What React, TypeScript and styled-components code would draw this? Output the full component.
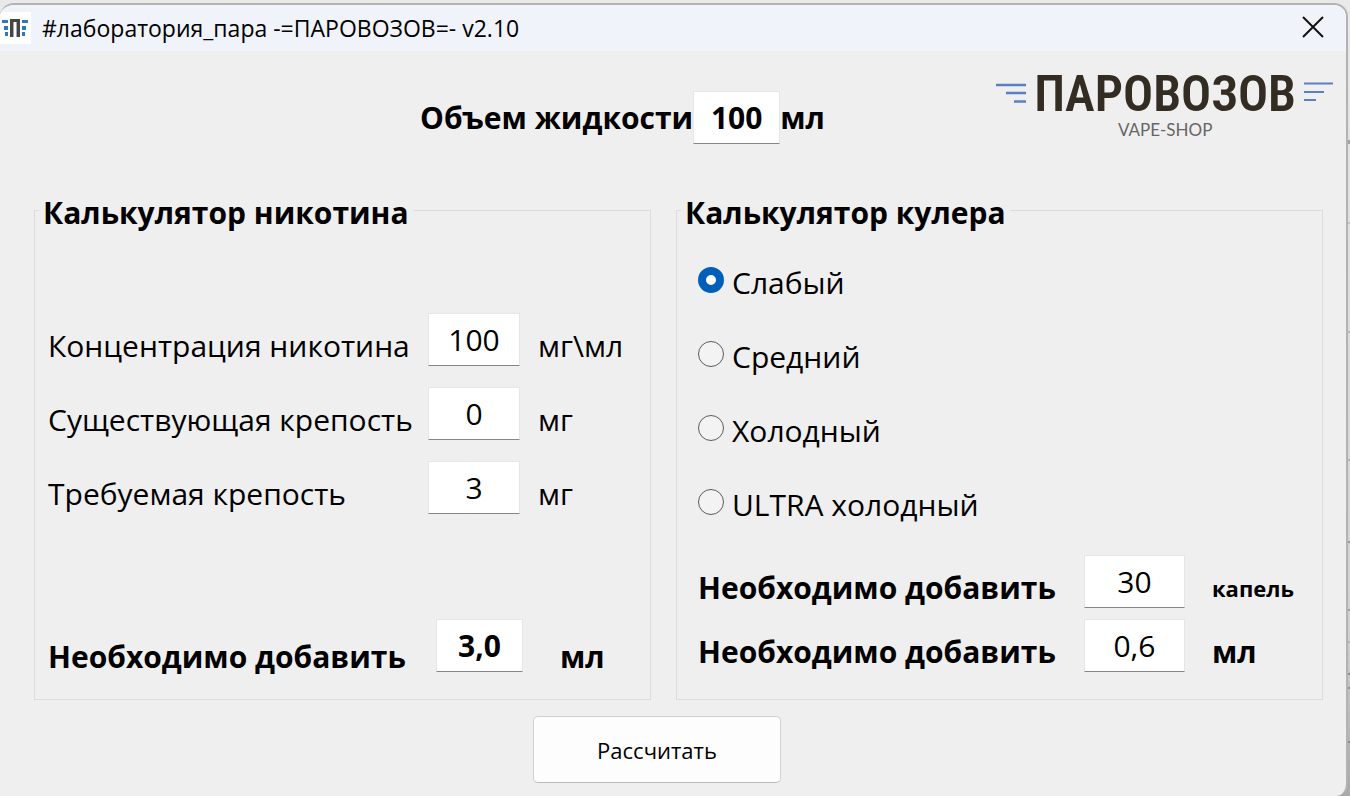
import React, { useState } from "react";
import styled, { createGlobalStyle } from "styled-components";

const edgeLines = [
  [140, 4, "#a2a2a2"],
  [222, 2, "#c2c2c2"],
  [331, 2, "#b8b8b8"],
  [459, 2, "#b4b4b4"],
  [541, 2, "#9c9c9c"],
  [609, 2, "#a4a4a4"],
  [641, 2, "#b4b4b4"],
  [673, 2, "#8f8f8f"],
  [687, 2, "#8f8f8f"],
  [741, 2, "#8a8a8a"],
]
  .map(([top, height, color]) => `linear-gradient(${color}, ${color}) right ${top}px / 2px ${height}px no-repeat`)
  .join(", ");

const GlobalStyle = createGlobalStyle`
  * { box-sizing: border-box; }
  body {
    margin: 0;
    background: linear-gradient(#e9e9e9, #e2e2e2 20%, #d0d0d0 80%, #a8a8a8);
    font-family: "Open Sans", "Noto Sans", sans-serif;
    color: #000;
  }
`;

const Desktop = styled.div`
  display: flow-root;
  background: ${edgeLines};
`;

const Window = styled.div`
  display: flex;
  flex-direction: column;
  min-height: calc(100vh - 3px);
  margin: 3px 2px 0 0;
  border-top: 2px solid #b3b3b3;
  border-right: 2px solid #b3b3b3;
  border-radius: 14px 14px 12px 0;
  background: #efefef;
  overflow: hidden;
`;

const TitleBar = styled.header`
  display: flex;
  align-items: center;
  height: 46px;
  padding-right: 21px;
  background: #f0f3fa;
`;

const AppIcon = styled.svg`
  width: 31px;
  height: 32px;
  margin-right: 11px;
`;

const Title = styled.h1`
  flex: 1;
  margin: 0;
  font-size: 23px;
  line-height: 32px;
  font-weight: 400;
`;

const CloseButton = styled.button`
  display: flex;
  padding: 0;
  border: 0;
  background: none;
`;

const Form = styled.form`
  display: flex;
  flex-direction: column;
`;

const Top = styled.div`
  display: grid;
  grid-template-columns: 420px auto 1fr;
  align-items: start;
  padding: 20px 12px 0 0;
  height: 140px;
`;

const Volume = styled.div`
  grid-column: 2;
  display: flex;
  align-items: center;
  padding-top: 20px;
`;

const Logo = styled.div`
  justify-self: end;
  display: grid;
  grid-template-columns: 30px auto 30px;
  column-gap: 8px;
  justify-items: center;
`;

const Wordmark = styled.span`
  font-family: "Roboto Condensed", Roboto, sans-serif;
  font-weight: 600;
  font-size: 50px;
  line-height: 46px;
  color: #332c22;
  white-space: nowrap;
`;

const Tagline = styled.span`
  grid-column: 2;
  font-family: Lato, sans-serif;
  font-weight: 400;
  font-size: 17px;
  line-height: 26px;
  color: #666;
`;

const Panels = styled.div`
  display: grid;
  grid-template-columns: 617fr 647fr;
  gap: 25px;
  padding: 0 23px 0 34px;
`;

const Panel = styled.fieldset`
  min-width: 0;
  margin: 0;
  padding: 0;
  border: 1px solid #dcdcdc;
`;

const Legend = styled.legend`
  margin-left: 4px;
  padding: 6px 4px 0;
  font-size: 30px;
  line-height: 32px;
  font-weight: 700;
`;

const Fields = styled.div`
  display: flex;
  flex-direction: column;
  gap: 21px;
  padding: 84px 0 105px 13px;
`;

const Row = styled.div<{ $cols: string }>`
  display: grid;
  grid-template-columns: ${(p) => p.$cols};
  align-items: end;
`;

const Caption = styled.label<{ $bold?: boolean; $small?: boolean; $low?: boolean }>`
  font-size: ${(p) => (p.$small ? "22px" : "30px")};
  line-height: ${(p) => (p.$low ? "30px" : "40px")};
  font-weight: ${(p) => (p.$bold ? 700 : 400)};
  white-space: nowrap;
`;

const NumberBox = styled.input<{ $bold?: boolean; $width: number }>`
  width: ${(p) => p.$width}px;
  height: 53px;
  padding: 0;
  border: 1px solid #e6e6e6;
  border-bottom-color: #868686;
  border-radius: 0;
  background: #fff;
  font-family: inherit;
  font-size: 30px;
  font-weight: ${(p) => (p.$bold ? 700 : 400)};
  text-align: center;
  color: #000;
`;

const Result = styled.div`
  padding: 0 0 27px 13px;
`;

const Options = styled.div`
  display: flex;
  flex-direction: column;
  gap: 34px;
  padding: 34px 0 30px 21px;
`;

const Option = styled.label`
  display: flex;
  align-items: center;
  gap: 8px;
  font-size: 30px;
  line-height: 40px;
`;

const Radio = styled.input`
  appearance: none;
  width: 26px;
  height: 26px;
  margin: 0 0 6px;
  border: 1px solid #5c5c5c;
  border-radius: 50%;
  background: #f3f3f3;
  &:checked {
    border: 8px solid #005fb8;
    background: #fff;
  }
`;

const CoolerResults = styled.div`
  display: flex;
  flex-direction: column;
  gap: 11px;
  padding: 0 0 26px 21px;
`;

const Actions = styled.div`
  display: flex;
  justify-content: center;
  padding: 16px 32px 13px 0;
`;

const CalculateButton = styled.button`
  width: 248px;
  height: 67px;
  border: 1px solid #d0d0d0;
  border-bottom-color: #bababa;
  border-radius: 5px;
  background: #fdfdfd;
  font-family: inherit;
  font-size: 22px;
  color: #000;
`;

const levels = [
  { name: "Слабый", drops: 30 },
  { name: "Средний", drops: 45 },
  { name: "Холодный", drops: 60 },
  { name: "ULTRA холодный", drops: 90 },
];

const parse = (s: string) => Number(s.replace(",", ".")) || 0;
const format = (n: number) => n.toFixed(1).replace(".", ",");

export default function App() {
  const [volume, setVolume] = useState("100");
  const [base, setBase] = useState("100");
  const [current, setCurrent] = useState("0");
  const [target, setTarget] = useState("3");
  const [level, setLevel] = useState(0);
  const [result, setResult] = useState({ nicotine: "3,0", drops: "30", cooler: "0,6" });

  const calculate = (e: React.FormEvent) => {
    e.preventDefault();
    const v = parse(volume);
    const span = parse(base) - parse(current);
    const drops = Math.round((levels[level].drops * v) / 100);
    setResult({
      nicotine: format(span > 0 ? (v * (parse(target) - parse(current))) / span : 0),
      drops: String(drops),
      cooler: format(drops * 0.02),
    });
  };

  const strengths = [
    { id: "base", label: "Концентрация никотина", unit: "мг\\мл", value: base, set: setBase },
    { id: "current", label: "Существующая крепость", unit: "мг", value: current, set: setCurrent },
    { id: "target", label: "Требуемая крепость", unit: "мг", value: target, set: setTarget },
  ];

  return (
    <Desktop>
      <GlobalStyle />
      <Window>
        <TitleBar>
          <AppIcon viewBox="0 0 31 32" aria-hidden="true">
            <path fill="#fff" d="M0 0h31v32H0z" />
            <path fill="#454545" d="M10 7h10v18h-3V10h-4v15h-3z" />
            <path fill="#a9a9a9" d="M13 10h1v15h-1zM16 10h1v15h-1z" />
            <path
              fill="#2a7bbd"
              d="M2 8h6v3H2zM4 14h4v4H4zM5 20h3v4H5zM22 8h6v3h-6zM22 14h4v4h-4zM22 20h3v4h-3z"
            />
          </AppIcon>
          <Title>#лаборатория_пара -=ПАРОВОЗОВ=- v2.10</Title>
          <CloseButton type="button" aria-label="Закрыть">
            <svg width="24" height="24" viewBox="0 0 24 24" stroke="#111" strokeWidth="2" aria-hidden="true">
              <path d="M2 1l20 20M22 1L2 21" />
            </svg>
          </CloseButton>
        </TitleBar>
        <Form onSubmit={calculate}>
          <Top>
            <Volume>
              <Caption $bold htmlFor="volume">Объем жидкости</Caption>
              <NumberBox $bold $width={87} id="volume" value={volume} onChange={(e) => setVolume(e.target.value)} />
              <Caption $bold as="span">мл</Caption>
            </Volume>
            <Logo>
              <svg width="30" height="44" viewBox="0 0 30 44" aria-hidden="true">
                <path d="M0 14h30M10 22h20M18 30.500h12" stroke="#5b7fc4" strokeWidth="2.500" />
              </svg>
              <Wordmark>ПАРОВОЗОВ</Wordmark>
              <svg width="30" height="44" viewBox="0 0 30 44" aria-hidden="true">
                <path d="M0 12.500h29M0 21h20M0 29h12" stroke="#5b7fc4" strokeWidth="2" />
              </svg>
              <Tagline>VAPE-SHOP</Tagline>
            </Logo>
          </Top>
          <Panels>
            <Panel>
              <Legend>Калькулятор никотина</Legend>
              <Fields>
                {strengths.map((s) => (
                  <Row key={s.id} $cols="380px 110px auto">
                    <Caption htmlFor={s.id}>{s.label}</Caption>
                    <NumberBox $width={92} id={s.id} value={s.value} onChange={(e) => s.set(e.target.value)} />
                    <Caption as="span">{s.unit}</Caption>
                  </Row>
                ))}
              </Fields>
              <Result>
                <Row $cols="388px 124px auto">
                  <Caption $bold $low htmlFor="nicotine">Необходимо добавить</Caption>
                  <NumberBox $bold $width={87} id="nicotine" readOnly value={result.nicotine} />
                  <Caption $bold $low as="span">мл</Caption>
                </Row>
              </Result>
            </Panel>
            <Panel>
              <Legend>Калькулятор кулера</Legend>
              <Options>
                {levels.map((l, i) => (
                  <Option key={l.name}>
                    <Radio type="radio" name="level" checked={level === i} onChange={() => setLevel(i)} />
                    {l.name}
                  </Option>
                ))}
              </Options>
              <CoolerResults>
                <Row $cols="386px 128px auto">
                  <Caption $bold htmlFor="drops">Необходимо добавить</Caption>
                  <NumberBox $width={101} id="drops" readOnly value={result.drops} />
                  <Caption $bold $small as="span">капель</Caption>
                </Row>
                <Row $cols="386px 128px auto">
                  <Caption $bold htmlFor="cooler">Необходимо добавить</Caption>
                  <NumberBox $width={101} id="cooler" readOnly value={result.cooler} />
                  <Caption $bold as="span">мл</Caption>
                </Row>
              </CoolerResults>
            </Panel>
          </Panels>
          <Actions>
            <CalculateButton type="submit">Рассчитать</CalculateButton>
          </Actions>
        </Form>
      </Window>
    </Desktop>
  );
}
